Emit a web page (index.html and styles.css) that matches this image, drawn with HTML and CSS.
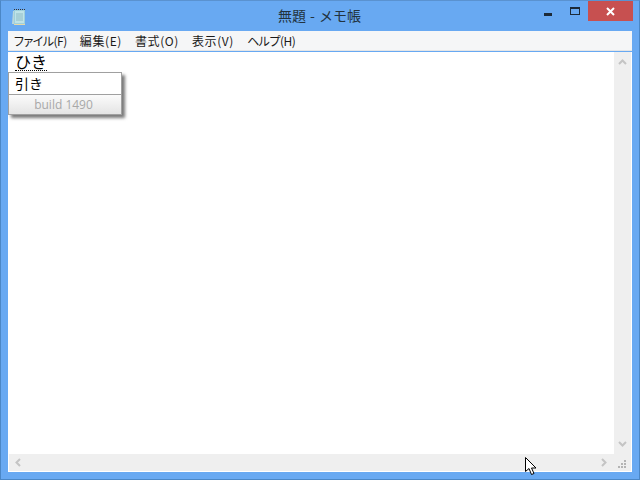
FILE: index.html
```html
<!DOCTYPE html>
<html lang="ja">
<head>
    <meta charset="UTF-8">
    <title>無題 - メモ帳</title>
    <link rel="stylesheet" href="styles.css">
</head>
<body>
    <div class="window">
        <div class="titlebar">
            <div class="app-icon">
                <svg width="16" height="18" viewBox="0 0 16 18">
                    <path d="M2 3h11v13H1z" fill="#b9d6dc"/>
                    <path d="M3 2h11v14H3z" fill="#9fd0dc"/>
                    <path d="M4 3h9v12H4z" fill="#bfe3e8"/>
                    <path d="M5 6h7M5 8h7M5 10h7M5 12h7" stroke="#8fbcc6"/>
                    <path d="M3 1.5h11" stroke="#333" stroke-dasharray="1 1"/>
                    <path d="M3 16.5h11" stroke="#e6d9a8"/>
                </svg>
            </div>
            <div class="title">無題 - メモ帳</div>
            <div class="controls">
                <div class="btn btn-min"><span class="min-bar"></span></div>
                <div class="btn btn-max"><span class="max-box"></span></div>
                <div class="btn btn-close">
                    <svg width="9" height="9" viewBox="0 0 9 9">
                        <path d="M1 1l7 7M8 1l-7 7" stroke="#fff" stroke-width="2"/>
                    </svg>
                </div>
            </div>
        </div>

        <div class="client">
            <ul class="menubar">
                <li class="kana">ファイル(F)</li>
                <li>編集(E)</li>
                <li>書式(O)</li>
                <li>表示(V)</li>
                <li class="kana">ヘルプ(H)</li>
            </ul>
            <div class="edit-row">
                <div class="edit">
                    <span class="composition">ひき</span>
                    <div class="ime-popup">
                        <div class="ime-item">引き</div>
                        <div class="ime-footer">build 1490</div>
                    </div>
                </div>
                <div class="vscroll">
                    <svg width="9" height="6" viewBox="0 0 9 6"><path d="M1 5l3.5-3.5L8 5" fill="none" stroke="#c4c4c4" stroke-width="2"/></svg>
                    <svg width="9" height="6" viewBox="0 0 9 6"><path d="M1 1l3.500 3.500L8 1" fill="none" stroke="#c4c4c4" stroke-width="2"/></svg>
                </div>
            </div>
            <div class="hscroll-row">
                <div class="hscroll">
                    <svg width="6" height="9" viewBox="0 0 6 9"><path d="M5 1L1.500 4.500 5 8" fill="none" stroke="#c4c4c4" stroke-width="2"/></svg>
                    <svg width="6" height="9" viewBox="0 0 6 9"><path d="M1 1l3.500 3.500L1 8" fill="none" stroke="#c4c4c4" stroke-width="2"/></svg>
                </div>
                <div class="grip">
                    <svg width="9" height="9" viewBox="0 0 9 9" fill="#b4b4b4">
                        <rect x="6" y="0" width="2" height="2"/>
                        <rect x="3" y="3" width="2" height="2"/><rect x="6" y="3" width="2" height="2"/>
                        <rect x="0" y="6" width="2" height="2"/><rect x="3" y="6" width="2" height="2"/><rect x="6" y="6" width="2" height="2"/>
                    </svg>
                </div>
            </div>
        </div>
    </div>

    <svg class="cursor" width="14" height="20" viewBox="0 0 14 20">
        <path d="M1.500 1.500v14l3.500-3 2.500 6 2.500-1-2.500-5.500h4.500z" fill="#fff" stroke="#000"/>
    </svg>
</body>
</html>
```

FILE: styles.css
```css
html, body {
    margin: 0;
    padding: 0;
    background: #fff;
}
body {
    font-family: "Noto Sans CJK JP", "Liberation Sans", sans-serif;
    color: #000;
    width: 640px;
    height: 489px;
    overflow: hidden;
    position: relative;
}
.window {
    box-sizing: border-box;
    width: 640px;
    height: 480px;
    background: #68a9f2;
    border: 1px solid #4b87c6;
    border-top-color: #5a92d0;
    padding: 0 7px 7px 7px;
    display: flex;
    flex-direction: column;
}
.titlebar {
    height: 29px;
    flex: none;
    display: grid;
    grid-template-columns: 1fr auto 1fr;
}
.app-icon {
    padding: 6px 0 0 3px;
}
.title {
    font-size: 14px;
    line-height: 18px;
    padding-top: 5px;
    padding-right: 1px;
    word-spacing: 1px;
    color: #22333f;
}
.controls {
    display: flex;
    justify-content: flex-end;
    align-items: flex-start;
    margin-right: -1px;
}
.btn {
    height: 20px;
    display: flex;
    align-items: center;
    justify-content: center;
}
.btn-min {
    width: 26px;
}
.min-bar {
    width: 8px;
    height: 3px;
    background: #1c2a38;
    margin-top: 7px;
}
.btn-max {
    width: 27px;
}
.max-box {
    box-sizing: border-box;
    width: 10px;
    height: 8px;
    border: 1px solid #1c2a38;
    border-top-width: 2px;
}
.btn-close {
    width: 45px;
    background: #c75050;
}
.client {
    flex: 1;
    display: flex;
    flex-direction: column;
    min-height: 0;
    margin-top: 1px;
    padding-bottom: 1px;
    background: #fff;
}
.menubar {
    list-style: none;
    margin: 0;
    padding: 0 0 0 6px;
    height: 19px;
    flex: none;
    display: flex;
    gap: 13px;
    align-items: center;
    background: #f5f6f7;
    border-bottom: 1px solid #e4e5e6;
    font-size: 12px;
    line-height: 19px;
    font-feature-settings: "palt";
    letter-spacing: 0.6px;
    color: #1a1a1a;
}
.menubar .kana {
    letter-spacing: -0.5px;
}
.edit-row {
    flex: 1;
    display: flex;
    min-height: 0;
    border-top: 1px solid #68a9f2;
    padding-right: 1px;
}
.edit {
    flex: 1;
    position: relative;
    background: #fff;
    padding-left: 7px;
}
.composition {
    display: block;
    width: fit-content;
    font-size: 16px;
    line-height: 18px;
    height: 18px;
    border-bottom: 1px dotted #000;
}
.ime-popup {
    position: absolute;
    left: 0;
    top: 20px;
    width: 114px;
    box-sizing: border-box;
    border: 1px solid #a0a0a0;
    background: #fff;
    box-shadow: 3px 3px 3px #7a7a7a;
}
.ime-item {
    height: 21px;
    padding-left: 6px;
    font-size: 14px;
    line-height: 21px;
    border-bottom: 1px solid #a0a0a0;
}
.ime-footer {
    height: 19px;
    padding-right: 3px;
    background: linear-gradient(#fbfbfb, #e4e4e4);
    font-family: "Open Sans", "Liberation Sans", sans-serif;
    font-size: 12px;
    line-height: 19px;
    text-align: center;
    color: #a8a8a8;
}
.vscroll {
    width: 17px;
    flex: none;
    background: #efefef;
    display: flex;
    flex-direction: column;
    justify-content: space-between;
    align-items: center;
    padding: 7px 0;
}
.hscroll-row {
    height: 17px;
    flex: none;
    display: flex;
    margin: 0 1px;
    background: #efefef;
}
.hscroll {
    flex: 1;
    display: flex;
    justify-content: space-between;
    align-items: center;
    padding: 0 7px 0 6px;
}
.grip {
    width: 17px;
    display: flex;
    align-items: flex-end;
    justify-content: center;
    padding-bottom: 2px;
}
.cursor {
    position: absolute;
    left: 524px;
    top: 456px;
}
```
